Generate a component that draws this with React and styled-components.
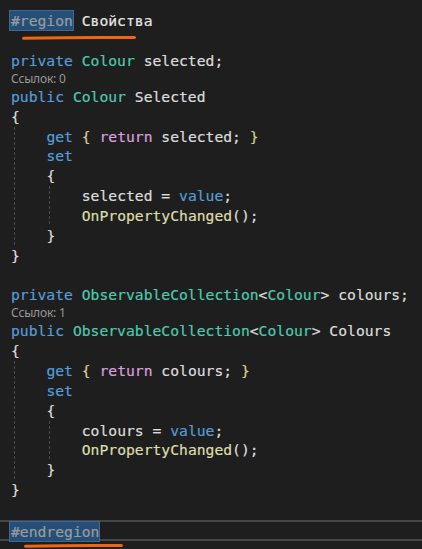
import React from 'react'
import styled, { createGlobalStyle } from 'styled-components'

const Global = createGlobalStyle`
  html, body {
    margin: 0;
    padding: 0;
    background: #1e1e1e;
  }
`

const colors = {
  kw: '#569cd6',
  type: '#4ec9b0',
  id: '#dcdcdc',
  ret: '#d8a0df',
  fn: '#dcdcaa',
  brace: '#dcdcdc',
  brace2: '#dccf8a',
  pre: '#9b9b9b',
  title: '#e6e6e6',
}

const Editor = styled.div`
  position: relative;
  width: 422px;
  height: 549px;
  box-sizing: border-box;
  overflow: hidden;
  padding: 11px 0 0 11px;
  background: #1e1e1e;
  font-family: "DejaVu Sans Mono", "Liberation Mono", monospace;
  font-size: 14.7px;
  color: #dcdcdc;
  -webkit-text-stroke: 0.2px currentColor;
`

const Line = styled.div`
  position: relative;
  height: 19.85px;
  line-height: 19.85px;
  white-space: pre;
`

const CurrentLine = styled(Line)`
  margin-left: -11px;
  padding-left: 11px;
  height: 17px;
  line-height: 17px;
  border-top: 2px solid #464646;
  border-bottom: 2px solid #464646;
`

const Lens = styled.div`
  height: 16.3px;
  line-height: 16.3px;
  font-family: "Noto Sans", "Liberation Sans", sans-serif;
  font-size: 12px;
  letter-spacing: -0.2px;
  color: #999999;
  -webkit-text-stroke: 0;
`

const Block = styled.div`
  position: relative;
  padding-left: 35.4px;

  &::before {
    content: "";
    position: absolute;
    left: 3px;
    top: 0;
    bottom: 0;
    width: 1px;
    background: repeating-linear-gradient(
      to bottom,
      #4a4a4a 0 3px,
      transparent 3px 5px
    );
  }
`

const Tok = styled.span`
  color: ${p => colors[p.$k] || colors.id};
`

const Selection = styled.span`
  display: inline-block;
  height: 19px;
  line-height: 19px;
  margin-left: -1px;
  padding: 0 0 0 1px;
  background: #264f78;
  outline: 1px solid #3b6896;
  color: ${colors.pre};
`

const Mark = styled.svg`
  position: absolute;
  left: ${p => p.$left}px;
  top: ${p => p.$top}px;
  overflow: visible;
`

function Underline({ left, top, width }) {
  return (
    <Mark $left={left} $top={top} width={width} height="4">
      <path
        d={`M1.5 2.2 Q ${width / 2} 1.2 ${width - 1.5} 1.6`}
        stroke="#f26511"
        strokeWidth="3"
        strokeLinecap="round"
        fill="none"
      />
    </Mark>
  )
}

function Property({ field, type, name, refs }) {
  return (
    <>
      <Line>
        <Tok $k="kw">private</Tok> {type} <Tok>{field}</Tok>;
      </Line>
      <Lens>Ссылок: {refs}</Lens>
      <Line>
        <Tok $k="kw">public</Tok> {type} <Tok>{name}</Tok>
      </Line>
      <Line><Tok $k="brace">{'{'}</Tok></Line>
      <Block>
        <Line>
          <Tok $k="kw">get</Tok> <Tok $k="brace2">{'{'}</Tok> <Tok $k="ret">return</Tok> <Tok>{field}</Tok>; <Tok $k="brace2">{'}'}</Tok>
        </Line>
        <Line><Tok $k="kw">set</Tok></Line>
        <Line><Tok $k="brace">{'{'}</Tok></Line>
        <Block>
          <Line>
            <Tok>{field}</Tok> = <Tok $k="kw">value</Tok>;
          </Line>
          <Line>
            <Tok $k="fn">OnPropertyChanged</Tok>();
          </Line>
        </Block>
        <Line><Tok $k="brace">{'}'}</Tok></Line>
      </Block>
      <Line><Tok $k="brace">{'}'}</Tok></Line>
    </>
  )
}

const colourType = <Tok $k="type">Colour</Tok>
const collectionType = (
  <>
    <Tok $k="type">ObservableCollection</Tok>&lt;<Tok $k="type">Colour</Tok>&gt;
  </>
)

export default function App() {
  return (
    <>
      <Global />
      <Editor>
        <Line>
          <Selection>#region</Selection> <Tok $k="title">Свойства</Tok>
          <Underline left={11} top={25} width={114} />
        </Line>
        <Line />
        <Property field="selected" type={colourType} name="Selected" refs={0} />
        <Line />
        <Property field="colours" type={collectionType} name="Colours" refs={1} />
        <Line />
        <CurrentLine>
          <Selection>#endregion</Selection>
          <Underline left={24} top={22} width={99} />
        </CurrentLine>
      </Editor>
    </>
  )
}
